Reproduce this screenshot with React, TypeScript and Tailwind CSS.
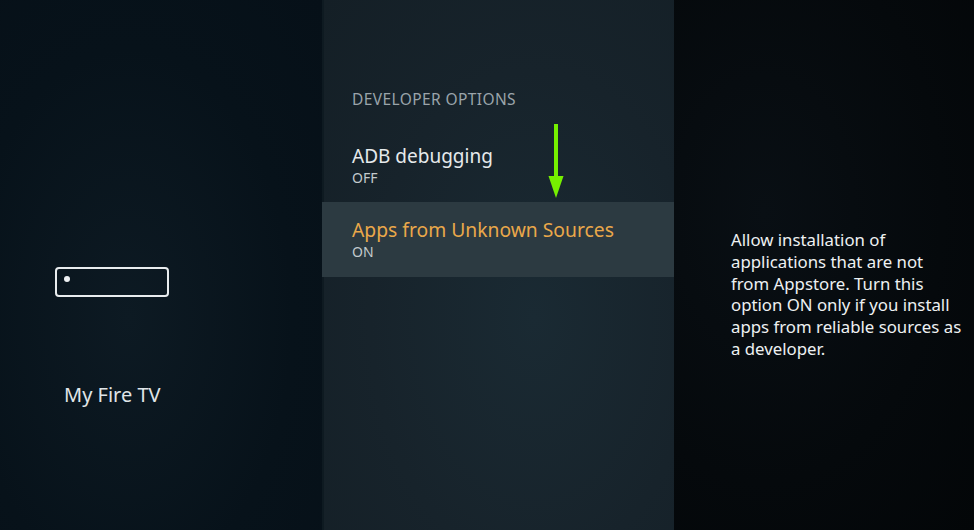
import React from "react";

export default function App() {
  const font = { fontFamily: '"Noto Sans", "Open Sans", sans-serif' };
  return (
    <div className="flex w-[974px] h-[530px] overflow-hidden" style={font}>
      {/* Left panel */}
      <div className="w-[322px] h-full bg-[radial-gradient(ellipse_at_40%_60%,#0d1a23_0%,#07121a_60%,#061018_100%)] flex flex-col">
        <div className="mt-[267px] ml-[55px] w-[114px] h-[30px] rounded-[4px] border-2 border-[#e8ecee] relative">
          <div className="absolute left-[7px] top-[7px] w-[6px] h-[6px] rounded-full bg-[#eef1f3]" />
        </div>
        <div className="mt-[86px] ml-[64px] text-[20px] leading-[24px] text-[#e0e5e8]">My Fire TV</div>
      </div>

      {/* Middle panel */}
      <div className="relative w-[352px] h-full bg-[radial-gradient(ellipse_at_60%_60%,#1a2a33_0%,#17232b_55%,#141f26_100%)] flex flex-col border-l-[2px] border-[#0e1a21]">
        <div className="mt-[89px] pl-[28px] text-[15.5px] leading-[20px] tracking-[0.4px] text-[#9aa4aa]">DEVELOPER OPTIONS</div>
        <div className="mt-[34px] pl-[28px] h-[59px]">
          <div className="text-[19px] leading-[26px] text-[#e6eaec]">ADB debugging</div>
          <div className="text-[14px] leading-[18px] text-[#c3cacd]">OFF</div>
        </div>
        <div className="h-[75px] bg-[#2c3a41] pt-[15px] -ml-[2px] pl-[30px]">
          <div className="text-[19.3px] leading-[26px] text-[#eaa84a]">Apps from Unknown Sources</div>
          <div className="text-[14px] leading-[18px] text-[#c3cacd]">ON</div>
        </div>
        <svg className="absolute left-[223px] top-[124px]" width="18" height="76" viewBox="0 0 18 76">
          <rect x="7" y="0" width="4" height="54" fill="#76f000" />
          <polygon points="1.5,52 16.5,52 9,74" fill="#76f000" />
        </svg>
      </div>

      {/* Right panel */}
      <div className="flex-1 h-full bg-[radial-gradient(ellipse_at_30%_40%,#090f14_0%,#05090c_60%,#030608_100%)]">
        <div className="mt-[229px] ml-[57px] text-[16.8px] leading-[21.8px] text-[#eef1f2]">
          Allow installation of<br />
          applications that are not<br />
          from Appstore. Turn this<br />
          option ON only if you install<br />
          apps from reliable sources as<br />
          a developer.
        </div>
      </div>
    </div>
  );
}
